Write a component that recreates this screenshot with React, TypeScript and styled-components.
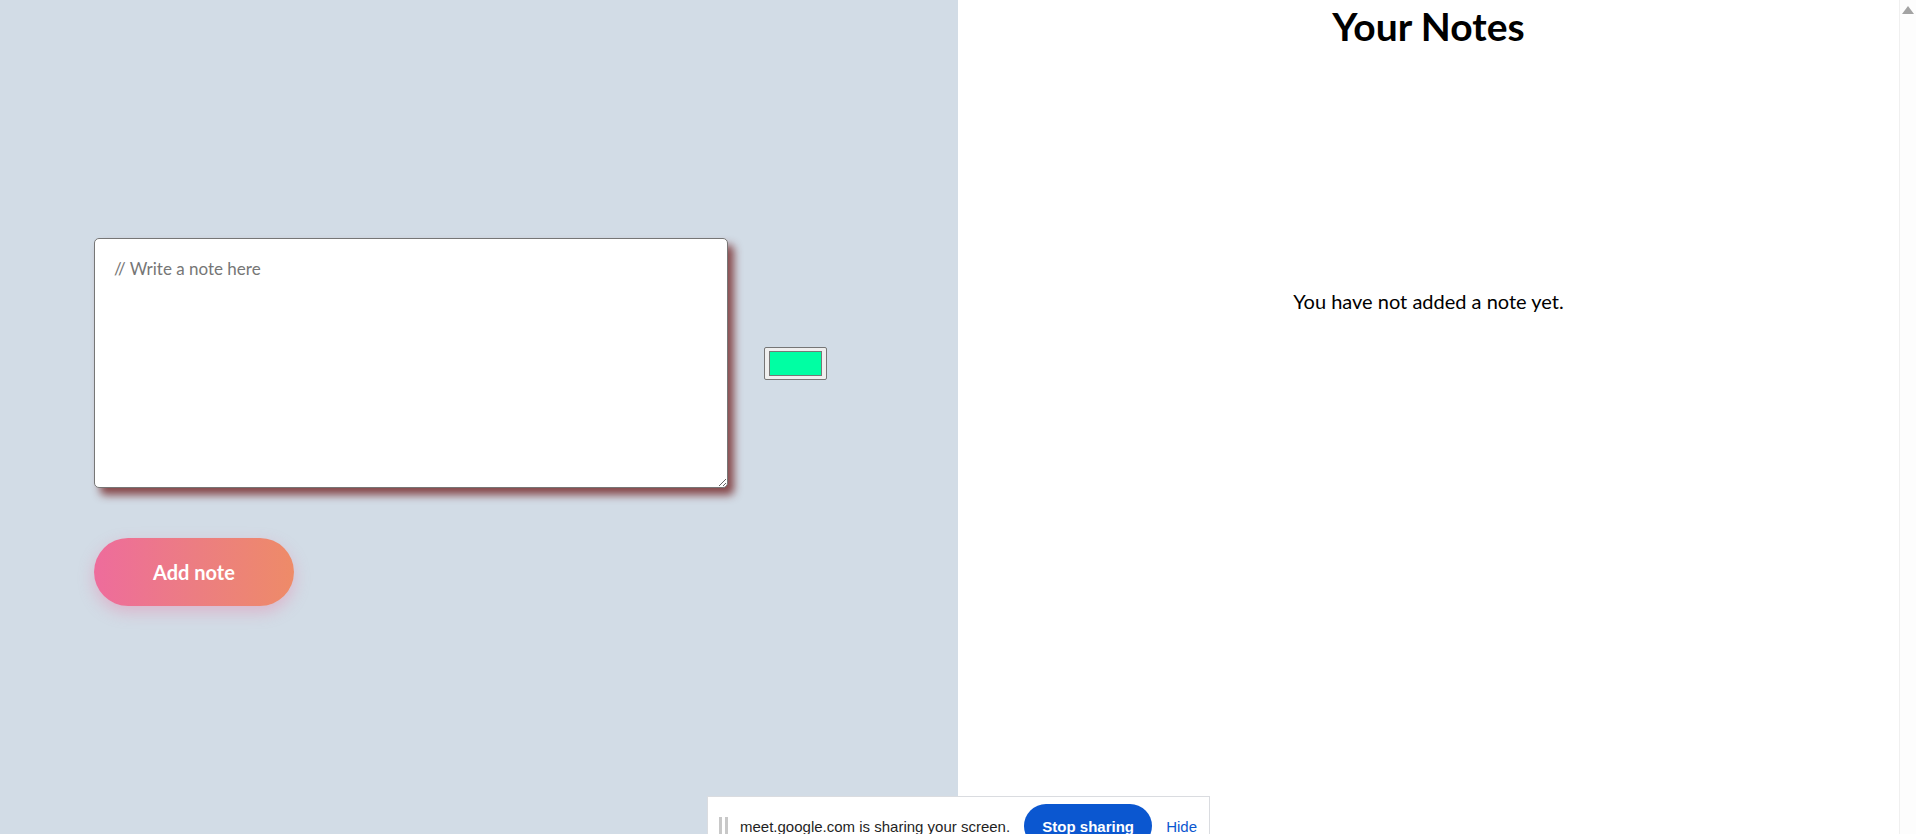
import React from "react";
import styled, { createGlobalStyle } from "styled-components";

const Global = createGlobalStyle`
  html, body { margin: 0; padding: 0; height: 100%; overflow: hidden; }
  body { font-family: "Lato", "Noto Sans", sans-serif; }
  #root { height: 100%; }
`;

const Page = styled.div`
  display: flex;
  width: 1916px;
  height: 834px;
  position: relative;
  overflow: hidden;
`;

const Editor = styled.section`
  width: 958px;
  flex: none;
  background: #d2dce6;
  box-sizing: border-box;
  padding: 238px 0 0 94px;
  display: flex;
  flex-direction: column;
  gap: 50px;
`;

const InputRow = styled.div`
  display: flex;
  align-items: center;
  gap: 36px;
`;

const NoteArea = styled.textarea`
  width: 634px;
  height: 250px;
  box-sizing: border-box;
  border: 1px solid #767676;
  border-radius: 5px;
  padding: 19px 19px;
  font-family: "Lato", "Noto Sans", sans-serif;
  font-size: 17px;
  background: #fff;
  box-shadow: 6px 7px 9px rgba(115, 35, 35, 0.8);
  resize: both;
  outline: none;
  &::placeholder { color: #767676; }
`;

const ColorInput = styled.input`
  width: 63px;
  height: 33px;
  box-sizing: border-box;
  padding: 3px 4px;
  border: 1px solid #767676;
  border-radius: 2px;
  background: #efefef;
  cursor: pointer;
  &::-webkit-color-swatch-wrapper { padding: 0; }
  &::-webkit-color-swatch { border: 1px solid #777; border-radius: 0; }
`;

const AddButton = styled.button`
  width: 200px;
  height: 68px;
  border: none;
  border-radius: 34px;
  background: linear-gradient(90deg, #ee6c9c 0%, #ec7d82 50%, #ee8b68 100%);
  color: #fff;
  font-family: "Lato", "Noto Sans", sans-serif;
  font-weight: 700;
  font-size: 20px;
  box-shadow: 0 6px 16px rgba(238, 108, 156, 0.35);
  cursor: pointer;
`;

const NotesPanel = styled.section`
  flex: 1;
  background: #fff;
  display: flex;
  flex-direction: column;
  align-items: center;
`;

const Title = styled.h1`
  margin: 3px 0 0;
  font-size: 39px;
  font-weight: 700;
  color: #000;
  line-height: 46px;
`;

const Empty = styled.p`
  margin: 240px 0 0;
  font-size: 20px;
  color: #000;
`;

const ScrollBar = styled.div`
  width: 17px;
  flex: none;
  background: #fdfdfd;
  border-left: 1px solid #f0f0f0;
  box-sizing: border-box;
  display: flex;
  justify-content: center;
  padding-top: 6px;
`;

const UpArrow = styled.div`
  width: 0;
  height: 0;
  border-left: 6px solid transparent;
  border-right: 6px solid transparent;
  border-bottom: 8px solid #a3a3a3;
`;

const ShareBar = styled.div`
  position: absolute;
  left: 707px;
  top: 796px;
  width: 503px;
  height: 60px;
  box-sizing: border-box;
  background: #fff;
  border: 1px solid #dadce0;
  display: flex;
  align-items: center;
  padding: 0 12px 0 11px;
  font-family: "Liberation Sans", Arial, sans-serif;
  font-size: 15px;
  color: #1f1f1f;
`;

const Grip = styled.span`
  display: flex;
  gap: 3px;
  margin-right: 12px;
  & > i { display: block; width: 3px; height: 18px; background: #c8c8c8; }
`;

const ShareText = styled.span`
  margin-right: 14px;
  white-space: nowrap;
`;

const StopButton = styled.button`
  height: 44px;
  width: 133px;
  border: none;
  border-radius: 22px;
  background: #0b57d0;
  color: #fff;
  font-family: "Liberation Sans", Arial, sans-serif;
  font-weight: 700;
  font-size: 15px;
  margin-right: 14px;
`;

const HideLink = styled.span`
  color: #0b57d0;
`;

export default function App() {
  return (
    <>
      <Global />
      <Page>
        <Editor>
          <InputRow>
            <NoteArea placeholder="// Write a note here" />
            <ColorInput type="color" defaultValue="#00ffa3" />
          </InputRow>
          <div>
            <AddButton>Add note</AddButton>
          </div>
        </Editor>
        <NotesPanel>
          <Title>Your Notes</Title>
          <Empty>You have not added a note yet.</Empty>
        </NotesPanel>
        <ScrollBar>
          <UpArrow />
        </ScrollBar>
        <ShareBar>
          <Grip><i /><i /></Grip>
          <ShareText>meet.google.com is sharing your screen.</ShareText>
          <StopButton>Stop sharing</StopButton>
          <HideLink>Hide</HideLink>
        </ShareBar>
      </Page>
    </>
  );
}
